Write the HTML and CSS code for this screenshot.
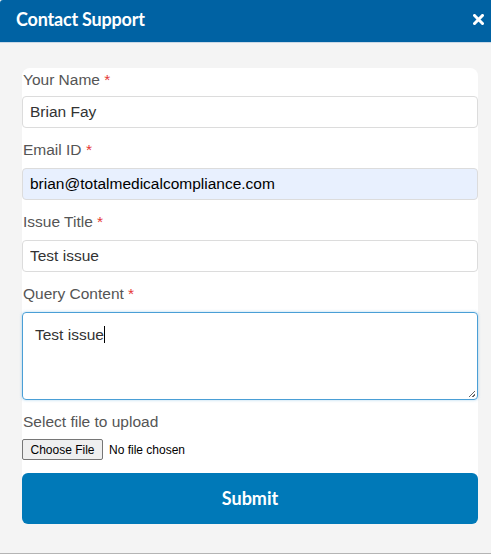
FILE: index.html
```html
<!DOCTYPE html>
<html>
<head>
<meta charset="utf-8">
<link rel="stylesheet" href="styles.css">
</head>
<body>
<div class="dialog">
  <div class="header">
    <h1 class="title">Contact Support</h1>
    <span class="close" aria-label="Close">
      <svg width="11" height="11" viewBox="0 0 11 11"><path d="M1.5 1.5 L9.5 9.5 M9.5 1.5 L1.5 9.5" stroke="#fff" stroke-width="3" stroke-linecap="square"/></svg>
    </span>
  </div>
  <div class="content">
    <form class="card">
      <label class="label">Your Name <span class="req">*</span></label>
      <input class="field" type="text" value="Brian Fay">
      <label class="label">Email ID <span class="req">*</span></label>
      <input class="field autofill" type="text" value="brian@totalmedicalcompliance.com">
      <label class="label">Issue Title <span class="req">*</span></label>
      <input class="field" type="text" value="Test issue">
      <label class="label">Query Content <span class="req">*</span></label>
      <div class="area">Test issue<span class="caret"></span><span class="grip"></span></div>
      <label class="label">Select file to upload</label>
      <div class="filerow">
        <span class="filebtn">Choose File</span>
        <span class="filetext">No file chosen</span>
      </div>
      <button class="submit" type="button">Submit</button>
    </form>
  </div>
</div>
</body>
</html>
```
FILE: styles.css
```css
html, body {
  margin: 0;
  padding: 0;
}
body {
  background: #f4f4f4;
  font-family: "Liberation Sans", Arial, sans-serif;
}
.dialog {
  height: 553px;
  border-bottom: 1px solid #b4b4b4;
  background: #f4f4f4;
}
.header {
  box-sizing: border-box;
  height: 43px;
  background: #0062a3;
  border-bottom: 1px solid #c9d8e6;
  display: flex;
  align-items: center;
  justify-content: space-between;
  padding: 0 7px 4px 16px;
  border-top-left-radius: 3px;
}
.title {
  margin: 0;
  font-family: Lato, "Open Sans", sans-serif;
  font-weight: 700;
  font-size: 18px;
  color: #fff;
  letter-spacing: -0.2px;
}
.close {
  display: flex;
  width: 11px;
  height: 11px;
}
.content {
  padding: 25px 13px 0 22px;
}
.card {
  background: #fff;
  border-radius: 8px;
  display: flex;
  flex-direction: column;
}
.label {
  display: block;
  font-size: 15.5px;
  line-height: 20px;
  color: #555;
  margin: 0 0 8px 1px;
}
.label:first-child {
  padding-top: 2px;
  margin-bottom: 6px;
}
.req {
  color: #e53935;
}
.field {
  box-sizing: border-box;
  height: 32px;
  margin: 0 0 12px;
  border: 1px solid #dcdcdc;
  border-radius: 4px;
  padding: 0 7px;
  font-family: "Liberation Sans", Arial, sans-serif;
  font-size: 15.5px;
  color: #333;
  background: #fff;
  outline: none;
}
.autofill {
  background: #e8f0fe;
  color: #000;
}
.area {
  position: relative;
  box-sizing: border-box;
  height: 88px;
  margin: 0 0 12px;
  border: 1px solid #4a9fd6;
  border-radius: 4px;
  box-shadow: 0 0 3px rgba(74, 159, 214, 0.45);
  padding: 12px 12px;
  font-size: 15.5px;
  line-height: 20px;
  color: #333;
}
.caret {
  display: inline-block;
  width: 1px;
  height: 17px;
  background: #000;
  vertical-align: -3px;
}
.grip {
  position: absolute;
  right: 2px;
  bottom: 2px;
  width: 6px;
  height: 6px;
  background: linear-gradient(135deg, transparent 45%, #666 45%, #666 55%, transparent 55%, transparent 75%, #666 75%, #666 85%, transparent 85%);
}
.filerow {
  display: flex;
  align-items: center;
  gap: 6px;
  height: 21px;
  margin: -1px 0 13px;
}
.filebtn {
  box-sizing: border-box;
  height: 21px;
  width: 81px;
  display: flex;
  align-items: center;
  justify-content: center;
  background: #efefef;
  border: 1px solid #767676;
  border-radius: 2px;
  font-size: 12px;
  color: #000;
}
.filetext {
  font-size: 12px;
  color: #000;
}
.submit {
  height: 51px;
  border: none;
  border-radius: 6px;
  background: #0079b8;
  color: #fff;
  font-family: Lato, "Open Sans", sans-serif;
  font-weight: 700;
  font-size: 18px;
  padding: 0 0 2px;
}
```
